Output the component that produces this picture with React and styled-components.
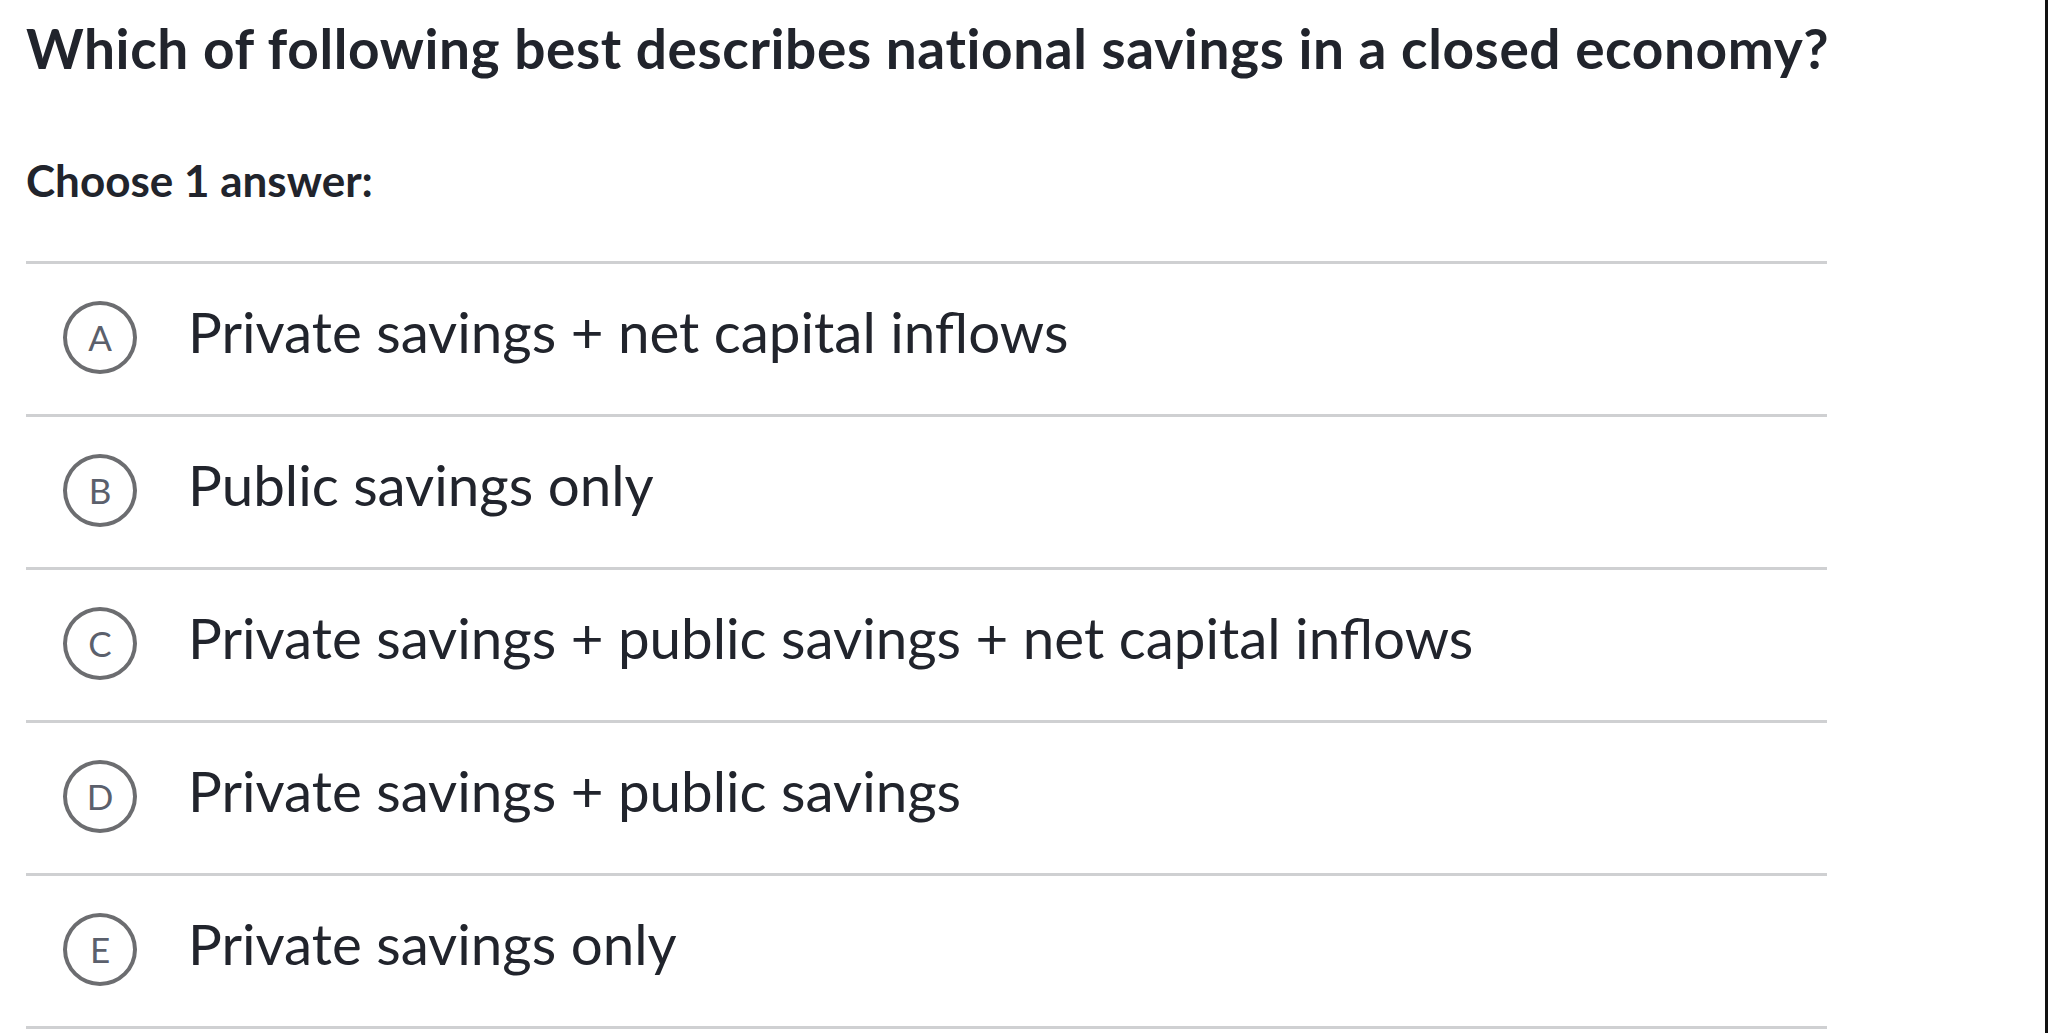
import React from "react";
import styled, { createGlobalStyle } from "styled-components";

const Global = createGlobalStyle`
  html, body { margin: 0; padding: 0; background: #fff; }
  body { font-family: Lato, "Noto Sans", sans-serif; color: #21242c; }
`;

const Page = styled.div`
  box-sizing: border-box;
  width: 2048px;
  height: 1033px;
  overflow: hidden;
  border-right: 3px solid #111;
  padding: 10px 0 0 26px;
`;

const Content = styled.div`
  width: 1801px;
`;

const Title = styled.h1`
  margin: 0;
  font-size: 55px;
  line-height: 76px;
  font-weight: 700;
  letter-spacing: 0.6px;
  white-space: nowrap;
`;

const Prompt = styled.div`
  margin-top: 66px;
  font-size: 44px;
  line-height: 56px;
  font-weight: 700;
`;

const Options = styled.div`
  margin-top: 53px;
  border-bottom: 3px solid #cfd0d2;
`;

const Row = styled.div`
  display: flex;
  align-items: center;
  height: 150px;
  border-top: 3px solid #cfd0d2;
  padding-left: 37px;
`;

const Circle = styled.div`
  box-sizing: border-box;
  width: 74px;
  height: 73px;
  margin-bottom: 4px;
  border-radius: 50%;
  border: 4px solid #6c6d70;
  display: flex;
  align-items: center;
  justify-content: center;
  font-size: 35px;
  color: #5b606c;
  flex: none;
`;

const Label = styled.div`
  margin-left: 51px;
  margin-bottom: 16px;
  font-size: 56.5px;
  font-weight: 400;
`;

const options = [
  ["A", "Private savings + net capital inflows"],
  ["B", "Public savings only"],
  ["C", "Private savings + public savings + net capital inflows"],
  ["D", "Private savings + public savings"],
  ["E", "Private savings only"],
];

export default function App() {
  return (
    <>
      <Global />
      <Page>
        <Content>
          <Title>Which of following best describes national savings in a closed economy?</Title>
          <Prompt>Choose 1 answer:</Prompt>
          <Options>
            {options.map(([l, t]) => (
              <Row key={l}>
                <Circle>{l}</Circle>
                <Label>{t}</Label>
              </Row>
            ))}
          </Options>
        </Content>
      </Page>
    </>
  );
}
